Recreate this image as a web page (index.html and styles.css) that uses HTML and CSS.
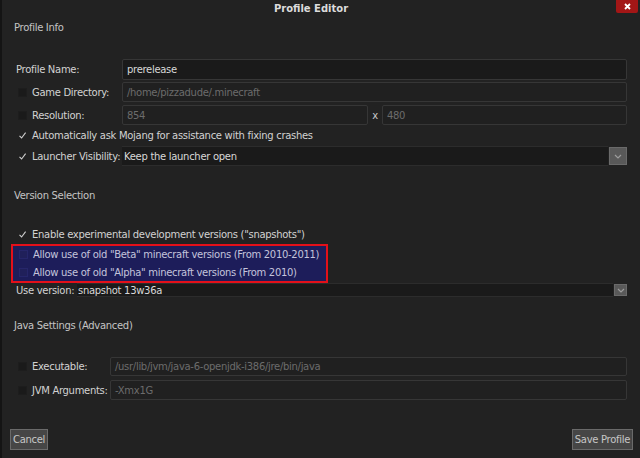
FILE: index.html
```html
<!DOCTYPE html>
<html lang="en">
<head>
    <meta charset="UTF-8">
    <title>Profile Editor</title>
    <link rel="stylesheet" href="styles.css">
</head>
<body>
    <div class="window">
        <div class="titlebar">
            <span class="title">Profile Editor</span>
            <span class="close">
                <svg width="7" height="7" viewBox="0 0 7 7"><path d="M1 1L6 6M6 1L1 6" stroke="#fff" stroke-width="1.8"/></svg>
            </span>
        </div>
        <div class="content">
            <div class="section">Profile Info</div>

            <div class="row row-name">
                <span class="label">Profile Name:</span>
                <div class="field field-on">prerelease</div>
            </div>
            <div class="row row-gamedir">
                <span class="check"></span>
                <span class="label label-check">Game Directory:</span>
                <div class="field field-off">/home/pizzadude/.minecraft</div>
            </div>
            <div class="row row-res">
                <span class="check"></span>
                <span class="label label-check">Resolution:</span>
                <div class="field field-off field-res">854</div>
                <span class="times">x</span>
                <div class="field field-off">480</div>
            </div>
            <div class="row row-crash">
                <span class="check checked"><svg width="9" height="9" viewBox="0 0 9 9"><path d="M1.5 4.8L3.6 7L7.6 1.6" fill="none" stroke="#cfcfcf" stroke-width="1.1"/></svg></span>
                <span>Automatically ask Mojang for assistance with fixing crashes</span>
            </div>
            <div class="row row-launcher">
                <span class="check checked"><svg width="9" height="9" viewBox="0 0 9 9"><path d="M1.5 4.8L3.6 7L7.6 1.6" fill="none" stroke="#cfcfcf" stroke-width="1.1"/></svg></span>
                <span class="label label-check">Launcher Visibility:</span>
                <div class="select">
                    <div class="select-text">Keep the launcher open</div>
                    <span class="drop"><svg width="8" height="5" viewBox="0 0 8 5"><path d="M1 1L4 4L7 1" fill="none" stroke="#9c9c9c" stroke-width="1.2"/></svg></span>
                </div>
            </div>

            <div class="section section-version">Version Selection</div>

            <div class="row row-snap">
                <span class="check checked"><svg width="9" height="9" viewBox="0 0 9 9"><path d="M1.5 4.8L3.6 7L7.6 1.6" fill="none" stroke="#cfcfcf" stroke-width="1.1"/></svg></span>
                <span>Enable experimental development versions ("snapshots")</span>
            </div>
            <div class="highlight">
                <div class="hl-row">
                    <span class="check check-hl"></span>
                    <span>Allow use of old "Beta" minecraft versions (From 2010-2011)</span>
                </div>
                <div class="hl-row">
                    <span class="check check-hl"></span>
                    <span>Allow use of old "Alpha" minecraft versions (From 2010)</span>
                </div>
            </div>
            <div class="row row-version">
                <span class="label label-version">Use version:</span>
                <div class="select select-small">
                    <div class="select-text">snapshot 13w36a</div>
                    <span class="drop drop-small"><svg width="8" height="5" viewBox="0 0 8 5"><path d="M1 1L4 4L7 1" fill="none" stroke="#9c9c9c" stroke-width="1.2"/></svg></span>
                </div>
            </div>

            <div class="section section-java">Java Settings (Advanced)</div>

            <div class="row row-exec">
                <span class="check"></span>
                <span class="label label-java">Executable:</span>
                <div class="field field-off">/usr/lib/jvm/java-6-openjdk-i386/jre/bin/java</div>
            </div>
            <div class="row row-jvm">
                <span class="check"></span>
                <span class="label label-java">JVM Arguments:</span>
                <div class="field field-off">-Xmx1G</div>
            </div>

            <div class="buttons">
                <button class="btn">Cancel</button>
                <button class="btn">Save Profile</button>
            </div>
        </div>
    </div>
</body>
</html>
```

FILE: styles.css
```css
body {
    margin: 0;
    background-color: #222222;
    font-family: "DejaVu Sans", sans-serif;
    font-size: 10px;
    letter-spacing: -0.3px;
    color: #d2d2d2;
}
.window {
    height: 458px;
    border-left: 2px solid #141414;
    box-sizing: border-box;
    display: flex;
    flex-direction: column;
}
.titlebar {
    height: 18px;
    display: flex;
    align-items: flex-start;
    flex-shrink: 0;
}
.title {
    flex: 1;
    text-align: center;
    font-weight: bold;
    line-height: 18px;
    color: #dcdcdc;
    letter-spacing: 0;
    padding-left: 4px;
}
.close {
    width: 22px;
    height: 13px;
    margin-right: 2px;
    background-color: #a31616;
    border-radius: 0 0 2px 2px;
    display: flex;
    align-items: center;
    justify-content: center;
}
.content {
    flex: 1;
    display: flex;
    flex-direction: column;
}
.section {
    height: 20px;
    line-height: 20px;
    padding-left: 12px;
    color: #c4c4c4;
    flex-shrink: 0;
}
.section-version {
    margin-top: 20px;
}
.section-java {
    margin-top: 19px;
}
.row {
    display: flex;
    align-items: center;
    height: 20px;
    padding: 0 13px 0 14px;
    flex-shrink: 0;
    white-space: nowrap;
}
.row-name {
    margin-top: 21px;
    height: 21px;
}
.row-gamedir {
    margin-top: 2px;
}
.row-res {
    margin-top: 3px;
}
.row-crash {
    height: 21px;
}
.row-snap {
    margin-top: 18px;
}
.row-version {
    height: 14px;
    padding-right: 13px;
}
.row-exec {
    margin-top: 21px;
    height: 19px;
}
.row-jvm {
    margin-top: 4px;
}
.label {
    width: 106px;
    flex-shrink: 0;
}
.label-check {
    width: 90px;
}
.label-java {
    width: 78px;
}
.label-version {
    width: 61px;
}
.check {
    width: 9px;
    height: 9px;
    margin: 0 5px 0 2px;
    background-color: #1a1a1a;
    border: 1px solid #1d1d1d;
    box-sizing: border-box;
    flex-shrink: 0;
    display: flex;
}
.check.checked {
    background: none;
    border: none;
}
.field {
    flex: 1;
    height: 100%;
    box-sizing: border-box;
    border: 1px solid #363636;
    border-radius: 2px;
    padding-left: 4px;
    display: flex;
    align-items: center;
    overflow: hidden;
}
.field-on {
    background-color: #1a1a1a;
    color: #d8d8d8;
}
.field-off {
    background-color: #202020;
    color: #6c6c6c;
}
.field-res {
    flex: 0 0 246px;
}
.times {
    width: 14px;
    text-align: center;
    color: #c8c8c8;
}
.select {
    flex: 1;
    height: 100%;
    display: flex;
}
.select-text {
    flex: 1;
    background-color: #1a1a1a;
    border-top: 1px solid #2c2c2c;
    border-bottom: 1px solid #2c2c2c;
    padding-left: 2px;
    display: flex;
    align-items: center;
    color: #d8d8d8;
}
.select-small .select-text {
    padding-left: 1px;
}
.drop {
    width: 18px;
    margin: 1px 0 1px 1px;
    background-color: #595959;
    border: 1px solid #6a6a6a;
    box-sizing: border-box;
    display: flex;
    align-items: center;
    justify-content: center;
}
.drop-small {
    width: 13px;
}
.highlight {
    margin-left: 9px;
    width: 317px;
    height: 39px;
    box-sizing: border-box;
    border: 2px solid #e3101a;
    background-color: #1d1d5a;
    color: #c4c4dc;
    flex-shrink: 0;
}
.hl-row {
    display: flex;
    align-items: center;
    height: 17px;
    padding-left: 4px;
    white-space: nowrap;
}
.hl-row + .hl-row {
    height: 18px;
}
.check-hl {
    background-color: #20205a;
    border-color: #26266a;
}
.buttons {
    margin-top: auto;
    display: flex;
    justify-content: space-between;
    padding: 0 7px 8px 8px;
}
.btn {
    height: 21px;
    padding: 0 2px;
    background-color: #464646;
    border: 1px solid #6a6a6a;
    color: #c6c6c6;
    font-family: "DejaVu Sans", sans-serif;
    font-size: 10px;
    letter-spacing: -0.3px;
}
```
